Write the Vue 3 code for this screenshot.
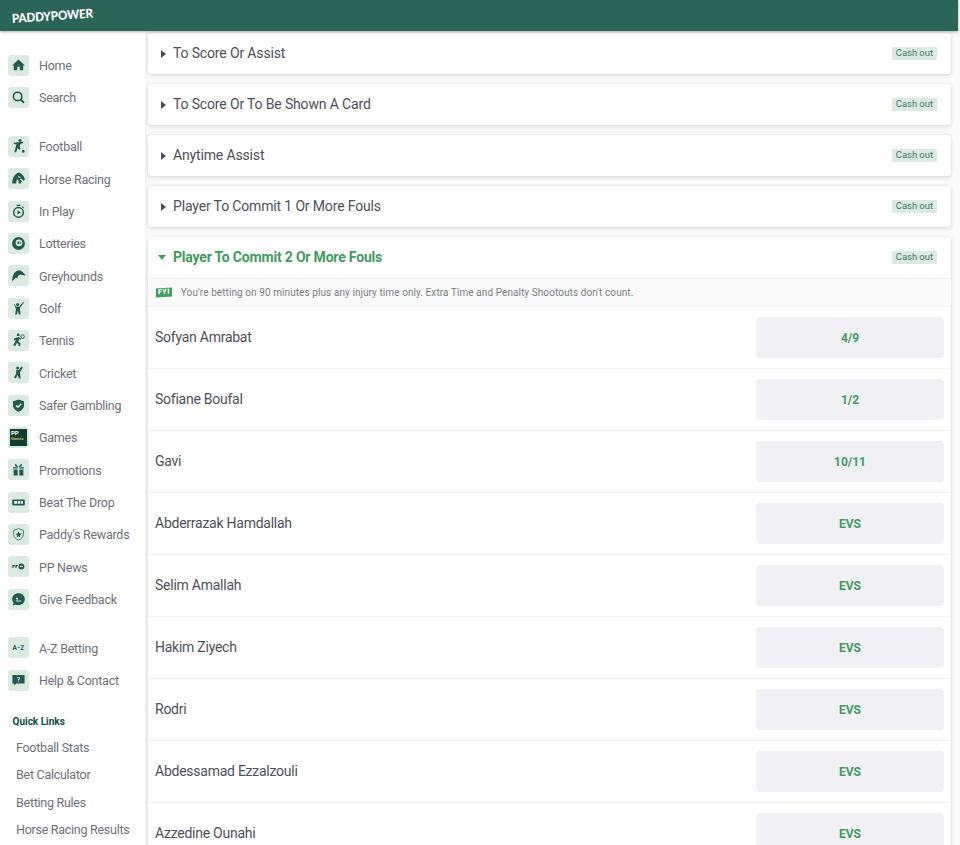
<script setup>
const groups = [
  [['Home','home'],['Search','search']],
  [['Football','football'],['Horse Racing','horse'],['In Play','inplay'],['Lotteries','lotto'],['Greyhounds','dog'],['Golf','golf'],['Tennis','tennis'],['Cricket','cricket'],['Safer Gambling','shield'],['Games','games'],['Promotions','gift'],['Beat The Drop','drop'],["Paddy's Rewards",'rewards'],['PP News','news'],['Give Feedback','feedback']],
  [['A-Z Betting','az'],['Help & Contact','help']]
].map(g => g.map(([label, icon]) => ({ label, icon })))
const links = ['Football Stats','Bet Calculator','Betting Rules','Horse Racing Results']
const closed = ['To Score Or Assist','To Score Or To Be Shown A Card','Anytime Assist','Player To Commit 1 Or More Fouls']
const rows = [['Sofyan Amrabat','4/9'],['Sofiane Boufal','1/2'],['Gavi','10/11'],['Abderrazak Hamdallah','EVS'],['Selim Amallah','EVS'],['Hakim Ziyech','EVS'],['Rodri','EVS'],['Abdessamad Ezzalzouli','EVS'],['Azzedine Ounahi','EVS']]
</script>

<template>
  <div class="page">
    <header class="topbar"><span class="logo">PADDYPOWER</span><i class="logo-dot"></i></header>
    <div class="body">
      <nav class="side">
        <ul v-for="(g, gi) in groups" :key="gi" class="group">
          <li v-for="item in g" :key="item.label" class="item">
            <span class="ico" :class="{ dark: item.icon === 'games' }">
              <svg v-if="item.icon !== 'games' && item.icon !== 'az'" viewBox="0 0 21 21" width="21" height="21" fill="#24594e">
                <path v-if="item.icon === 'home'" d="M10.5 4.6 17 10.4H15.2V15.2H11.8V11.8H9.2V15.2H5.8V10.4H4Z"/>
                <g v-else-if="item.icon === 'search'"><circle cx="9.6" cy="9.4" r="4.2" fill="none" stroke="#24594e" stroke-width="1.6"/><path d="M12.7 12.5 16 15.9" stroke="#24594e" stroke-width="1.8" fill="none"/></g>
                <g v-else-if="item.icon === 'football'"><circle cx="12" cy="4.6" r="1.5"/><path d="M5.6 6.8 14.8 5.8 15 7 12.2 8.2 11.6 11 12.8 13.2 11 13.8 9.6 12 8 16.6 6.4 16 8.4 8.6 5.8 8Z"/><circle cx="15.2" cy="15.4" r="1.4"/></g>
                <g v-else-if="item.icon === 'horse'"><path d="M4.2 15.6C4 10.2 6.8 5 11.2 4.4L12.4 5.2C14.6 6.2 16.2 9 17 11.4L15.6 12.8 13 10.4 11.8 11 13.8 13.6 12.6 15.6H10.6L10.8 13 8.8 11.2 8 15.6Z"/><path d="M9.8 7.4 13 9.4 10.6 9.8Z" fill="#dcebe2"/><path d="M14 12.2 15.4 13.8" stroke="#dcebe2" stroke-width=".7"/></g>
                <g v-else-if="item.icon === 'inplay'"><circle cx="10.5" cy="11.4" r="4.8" fill="none" stroke="#24594e" stroke-width="1.5"/><path d="M8.6 3.8H12.4V5H8.6ZM14.6 5.2 16 6.5 15.2 7.3 13.8 6ZM9.6 9.2 12.8 11.4 9.6 13.6Z"/></g>
                <g v-else-if="item.icon === 'lotto'"><circle cx="10.5" cy="10.5" r="6.4"/><circle cx="11" cy="9.8" r="3.4" fill="#dcebe2"/><path d="M9.6 8.4H11V11H9.6ZM11.6 8.4H12.6V11H11.6Z"/></g>
                <path v-else-if="item.icon === 'dog'" d="M4.2 16.6C4.2 11 5.6 6.6 10.4 5.4 12.6 5 13.8 6.4 17.4 9.8L16.6 10.6 12.4 9.6C10.6 10 9.4 11.4 9.4 13.6L7.8 12.6Z"/>
                <g v-else-if="item.icon === 'golf'"><circle cx="9.6" cy="6.4" r="1.5"/><path d="M7.8 8.4H11.4L15.2 4 16 4.6 11.8 10 12.6 16.6H10.8L9.8 12.6 9 16.6H7.2L8 11 6.2 6.6 7 6.2Z"/></g>
                <g v-else-if="item.icon === 'tennis'"><circle cx="10.2" cy="4.9" r="1.4"/><path d="M6.6 8.2 10.8 7 13.2 8.8 12.5 9.8 11.2 9 10.4 11.4 12.6 13.4 12 16H10.4L10.6 14 8.8 13 7.6 15.8 5 15.4 7 12 8 9.4 6.4 10.6 5.6 9.6Z"/><circle cx="14.6" cy="6.6" r="1.8" fill="none" stroke="#24594e" stroke-width=".9"/></g>
                <g v-else-if="item.icon === 'cricket'"><circle cx="9.6" cy="6" r="1.5"/><path d="M8 8.2 11 8 13.4 4.6 14.8 5.4 12 10.4 12.6 16.4H10.8L9.8 12.8 7.8 16.4 6 15.6 8.2 11.4Z"/></g>
                <g v-else-if="item.icon === 'shield'"><path d="M10.5 4.4 16 6.2V10.2C16 13.2 13.6 15.6 10.5 16.8 7.4 15.6 5 13.2 5 10.2V6.2Z"/><path d="M8 10.4 10 12.2 13.2 8.8" stroke="#dcebe2" stroke-width="1.5" fill="none"/></g>
                <g v-else-if="item.icon === 'gift'"><path d="M5 8.2H9.7V9.6H5ZM11.3 8.2H16V9.6H11.3ZM5.6 10.4H9.7V16.6H5.6ZM11.3 10.4H15.4V16.6H11.3Z"/><path d="M10.5 8 7.8 4.8 7 5.6 7.4 7.4ZM10.5 8 13.2 4.8 14 5.6 13.6 7.4Z"/></g>
                <g v-else-if="item.icon === 'drop'"><rect x="4.2" y="7.4" width="12.6" height="6" rx="1"/><rect x="6" y="9" width="3" height="2.8" fill="#dcebe2"/><rect x="9.6" y="9" width="2.4" height="2.8" fill="#dcebe2"/><rect x="12.6" y="9" width="2.4" height="2.8" fill="#dcebe2"/></g>
                <g v-else-if="item.icon === 'rewards'"><path d="M10.5 4.6 15.4 6.4V10.4C15.4 13 13.2 15.2 10.5 16.2 7.8 15.2 5.6 13 5.6 10.4V6.4Z" fill="none" stroke="#4d8576" stroke-width="1"/><path d="M10.5 7.6 11.4 9.6 13.4 9.8 11.9 11.2 12.3 13.2 10.5 12.2 8.7 13.2 9.1 11.2 7.6 9.8 9.6 9.6Z"/></g>
                <g v-else-if="item.icon === 'news'"><path d="M4.4 9H6.8V10.2H5.5V12H4.4ZM7.4 9H9.8V10.2H8.5V12H7.4Z"/><circle cx="13.4" cy="10.5" r="3"/><rect x="11.8" y="9.8" width="3.2" height="1.2" fill="#dcebe2"/></g>
                <g v-else-if="item.icon === 'feedback'"><path d="M10.5 4.2C14.2 4.2 16.8 6.8 16.8 10.2 16.8 13.6 14.2 16 10.5 16 9.4 16 8.4 15.8 7.5 15.4L4.8 16.6 5.6 13.8C4.7 12.8 4.2 11.6 4.2 10.2 4.2 6.8 6.8 4.2 10.5 4.2Z"/><path d="M7.8 11.6H13.2V12.6H7.8ZM8 8.8H10V10.6H8Z" fill="#dcebe2"/></g>
                <g v-else-if="item.icon === 'help'"><path d="M4.4 5H16.6V13.6H8.4L5.8 15.6V13.6H4.4Z"/><path d="M9.2 7.2H11.8V9.8H11V10.4H10V9H11V8.2H9.2ZM10 11H11V12H10Z" fill="#dcebe2"/></g>
              </svg>
              <span v-else-if="item.icon === 'az'" class="az">A-Z</span>
              <span v-else class="games"><b>PP</b><em>Games</em></span>
            </span>
            <span class="label">{{ item.label }}</span>
          </li>
        </ul>
        <div class="quick">Quick Links</div>
        <ul class="links"><li v-for="l in links" :key="l">{{ l }}</li></ul>
      </nav>
      <main class="main">
        <section v-for="t in closed" :key="t" class="card head">
          <i class="tri-right"></i><h3>{{ t }}</h3><span class="cash">Cash out</span>
        </section>
        <section class="card">
          <div class="head open">
            <i class="tri-down"></i><h3>Player To Commit 2 Or More Fouls</h3><span class="cash">Cash out</span>
          </div>
          <div class="fyi"><span class="tag">FYI</span><span>You're betting on 90 minutes plus any injury time only. Extra Time and Penalty Shootouts don't count.</span></div>
          <div v-for="r in rows" :key="r[0]" class="row">
            <span class="name">{{ r[0] }}</span><button class="odds">{{ r[1] }}</button>
          </div>
        </section>
      </main>
    </div>
  </div>
</template>

<style>
html, body { margin: 0; overflow: hidden; background: #fff; }
</style>

<style scoped>
.page { height: 845px; overflow: hidden; font-family: Roboto, "Liberation Sans", sans-serif; display: flex; flex-direction: column; }
ul { list-style: none; margin: 0; padding: 0; }
.topbar { flex: 0 0 31px; height: 31px; margin-right: 2px; background: #2b6558; box-shadow: 0 1px 3px rgba(0,0,0,.3); position: relative; z-index: 2; display: flex; align-items: center; padding-left: 12px; }
.logo { color: #fff; font: 900 12.4px Lato, sans-serif; letter-spacing: -.1px; transform: rotate(-3.8deg) scaleX(.93); transform-origin: left center; margin-top: 5px; }
.logo-dot { width: 1px; height: 1px; background: #5bbf6f; margin: -4px 0 0 -6px; }
.body { flex: 1; display: flex; min-height: 0; }
.side { width: 145px; flex: none; background: #fff; padding-top: 18px; box-shadow: 1px 0 3px rgba(0,0,0,.04); position: relative; z-index: 1; box-sizing: border-box; }
.group { margin-bottom: 16.6px; padding-left: 8px; }
.item { height: 32.33px; display: flex; align-items: center; gap: 10px; }
.ico { width: 21px; height: 21px; border-radius: 3px; background: #dcebe2; display: flex; align-items: center; justify-content: center; flex: none; overflow: hidden; }
.ico svg { display: block; }
.label { color: #6e7178; font-size: 12.5px; letter-spacing: -.25px; margin-top: 1px; }
.az { font: 700 6.5px Roboto, sans-serif; color: #24594e; letter-spacing: .4px; }
.games { width: 17px; height: 17px; background: #123f33; display: flex; flex-direction: column; padding: 1px 1px; box-sizing: border-box; line-height: 6px; }
.games b { font-size: 6px; color: #fff; }
.games em { font-size: 4px; font-style: normal; color: #d8b64a; font-weight: 700; }
.quick { font-size: 10px; font-weight: 700; color: #0f4f3f; padding: 3px 0 0 12.5px; line-height: 12px; }
.links { padding: 6px 0 0 16px; }
.links li { height: 27.3px; line-height: 27.3px; font-size: 12.5px; letter-spacing: -.27px; color: #6e7178; white-space: nowrap; }
.main { flex: 1; background: #fafafa; padding: 2px 9px 0 3px; min-width: 0; display: flex; flex-direction: column; gap: 10px; }
.card { background: #fff; border-radius: 4px; box-shadow: 0 1px 4px rgba(0,0,0,.16); flex: none; }
.head { height: 41px; display: flex; align-items: center; padding: 0 14px 0 13px; box-sizing: border-box; }
.head h3 { margin: -1px 0 0 7px; font-size: 14px; letter-spacing: -.15px; font-weight: 400; color: #4d5058; flex: 1; }
.open { border-bottom: 1px solid #f1f1f1; height: 42px; padding-left: 10px; }
.open h3 { font-weight: 700; color: #3f9b5f; margin-left: 7px; letter-spacing: -.19px; }
.tri-right { width: 0; height: 0; border-left: 5px solid #4a4d55; border-top: 4px solid transparent; border-bottom: 4px solid transparent; }
.tri-down { width: 0; height: 0; border-top: 5px solid #3f9b5f; border-left: 4.5px solid transparent; border-right: 4.5px solid transparent; }
.cash { background: #dcebe2; color: #3f7a67; font-size: 9.5px; letter-spacing: -.05px; line-height: 12px; padding: 0 4px 1px; border-radius: 1px; margin-top: -1px; }
.fyi { height: 28px; background: #fafafa; border-bottom: 1px solid #f1f1f1; display: flex; align-items: center; gap: 9px; padding-left: 8px; font-size: 10px; color: #7a7d84; letter-spacing: .08px; box-sizing: border-box; }
.tag { background: #3f9b5f; color: #fff; font-size: 7px; font-weight: 900; padding: 0 2px; line-height: 9px; transform: skewY(-3deg); letter-spacing: .5px; }
.row { height: 62px; display: flex; align-items: center; justify-content: space-between; padding: 0 7px 0 7px; border-bottom: 1px solid #f1f1f1; box-sizing: border-box; }
.name { font-size: 14px; letter-spacing: -.25px; color: #4d5058; margin-top: -1px; }
.odds { width: 188px; height: 41px; border: 0; border-radius: 4px; background: #f0f0f5; color: #3f9b5f; font: 700 12px Roboto, sans-serif; }
</style>
